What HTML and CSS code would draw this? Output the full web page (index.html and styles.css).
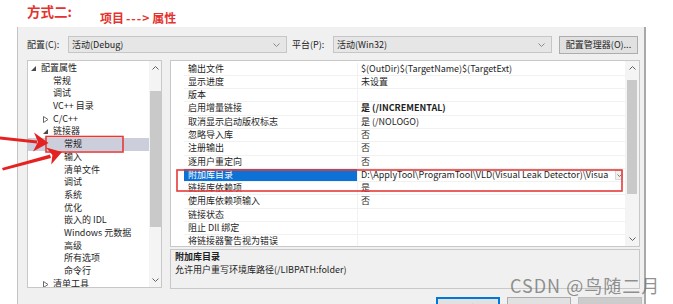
FILE: index.html
```html
<!DOCTYPE html>
<html>
<head>
<meta charset="utf-8">
<link rel="stylesheet" href="styles.css">
</head>
<body>
<div class="title">
  <span class="t1">方式二:</span>
  <span class="t2">项目<span class="dash">---&gt;</span>属性</span>
</div>
<div class="dialog">
  <div class="toolbar">
    <span class="lbl">配置(C):</span>
    <div class="combo"><span class="ctext">活动(Debug)</span><svg class="chev" width="7" height="4" viewBox="0 0 7 4"><polyline points="0.5,0.5 3.5,3.5 6.5,0.5" fill="none" stroke="#8a8a8a" stroke-width="1"/></svg></div>
    <span class="lbl lbl2">平台(P):</span>
    <div class="combo"><span class="ctext">活动(Win32)</span><svg class="chev" width="7" height="4" viewBox="0 0 7 4"><polyline points="0.5,0.5 3.5,3.5 6.5,0.5" fill="none" stroke="#8a8a8a" stroke-width="1"/></svg></div>
    <div class="btn">配置管理器(O)...</div>
  </div>
  <div class="main">
    <div class="tree">
      <div class="tree-list">
        <div class="row l0"><span class="tg"><svg width="5" height="5" viewBox="0 0 5 5"><polygon points="5,0 5,5 0,5" fill="#4a4a4a"/></svg></span>配置属性</div>
        <div class="row l1"><span class="tg"></span>常规</div>
        <div class="row l1"><span class="tg"></span>调试</div>
        <div class="row l1"><span class="tg"></span>VC++ 目录</div>
        <div class="row l1"><span class="tg"><svg width="6" height="7" viewBox="0 0 6 7"><polygon points="0.5,0.5 5,3.5 0.5,6.5" fill="none" stroke="#6a6a6a" stroke-width="1"/></svg></span>C/C++</div>
        <div class="row l1"><span class="tg"><svg width="5" height="5" viewBox="0 0 5 5"><polygon points="5,0 5,5 0,5" fill="#4a4a4a"/></svg></span>链接器</div>
        <div class="row l2 sel"><span class="tg"></span>常规</div>
        <div class="row l2"><span class="tg"></span>输入</div>
        <div class="row l2"><span class="tg"></span>清单文件</div>
        <div class="row l2"><span class="tg"></span>调试</div>
        <div class="row l2"><span class="tg"></span>系统</div>
        <div class="row l2"><span class="tg"></span>优化</div>
        <div class="row l2"><span class="tg"></span>嵌入的 IDL</div>
        <div class="row l2"><span class="tg"></span>Windows 元数据</div>
        <div class="row l2"><span class="tg"></span>高级</div>
        <div class="row l2"><span class="tg"></span>所有选项</div>
        <div class="row l2"><span class="tg"></span>命令行</div>
        <div class="row l1"><span class="tg"><svg width="6" height="7" viewBox="0 0 6 7"><polygon points="0.5,0.5 5,3.5 0.5,6.5" fill="none" stroke="#6a6a6a" stroke-width="1"/></svg></span>清单工具</div>
      </div>
      <div class="vscroll tscroll">
        <svg class="sarrow" width="7" height="4" viewBox="0 0 7 4"><polyline points="0.5,3.5 3.5,0.5 6.5,3.5" fill="none" stroke="#606060" stroke-width="1"/></svg>
        <div class="thumb tthumb"></div>
        <svg class="sarrow down" width="7" height="4" viewBox="0 0 7 4"><polyline points="0.5,0.5 3.5,3.5 6.5,0.5" fill="none" stroke="#606060" stroke-width="1"/></svg>
      </div>
    </div>
    <div class="rightcol">
      <div class="grid">
        <div class="gutter"></div>
        <div class="grows">
          <div class="grow"><span class="name">输出文件</span><span class="val">$(OutDir)$(TargetName)$(TargetExt)</span></div>
          <div class="grow"><span class="name">显示进度</span><span class="val">未设置</span></div>
          <div class="grow"><span class="name">版本</span><span class="val"></span></div>
          <div class="grow"><span class="name">启用增量链接</span><span class="val b">是 (/INCREMENTAL)</span></div>
          <div class="grow"><span class="name">取消显示启动版权标志</span><span class="val">是 (/NOLOGO)</span></div>
          <div class="grow"><span class="name">忽略导入库</span><span class="val">否</span></div>
          <div class="grow"><span class="name">注册输出</span><span class="val">否</span></div>
          <div class="grow"><span class="name">逐用户重定向</span><span class="val">否</span></div>
          <div class="grow gsel"><span class="name">附加库目录</span><span class="val">D:\ApplyTool\ProgramTool\VLD(Visual Leak Detector)\Visua</span><span class="ddbtn"><svg width="5" height="3" viewBox="0 0 5 3"><polyline points="0.5,0.5 2.5,2.5 4.5,0.5" fill="none" stroke="#777" stroke-width="1"/></svg></span></div>
          <div class="grow"><span class="name">链接库依赖项</span><span class="val">是</span></div>
          <div class="grow"><span class="name">使用库依赖项输入</span><span class="val">否</span></div>
          <div class="grow"><span class="name">链接状态</span><span class="val"></span></div>
          <div class="grow"><span class="name">阻止 Dll 绑定</span><span class="val"></span></div>
          <div class="grow"><span class="name">将链接器警告视为错误</span><span class="val"></span></div>
        </div>
        <div class="vscroll gscroll">
          <svg class="sarrow" width="7" height="4" viewBox="0 0 7 4"><polyline points="0.5,3.5 3.5,0.5 6.5,3.5" fill="none" stroke="#606060" stroke-width="1"/></svg>
          <div class="thumb gthumb"></div>
          <svg class="sarrow down" width="7" height="4" viewBox="0 0 7 4"><polyline points="0.5,0.5 3.5,3.5 6.5,0.5" fill="none" stroke="#606060" stroke-width="1"/></svg>
        </div>
      </div>
      <div class="desc">
        <div class="dtitle">附加库目录</div>
        <div class="dtext">允许用户重写环境库路径(/LIBPATH:folder)</div>
      </div>
    </div>
  </div>
  <div class="buttons">
    <div class="dbtn primary">确定</div>
    <div class="dbtn">取消</div>
    <div class="dbtn disabled">应用</div>
  </div>
</div>

<svg class="annot" width="673" height="304" viewBox="0 0 673 304">
  <rect x="46" y="136.5" width="77" height="15.5" fill="none" stroke="#e53a3a" stroke-width="1.6"/>
  <rect x="177" y="170" width="445" height="21" fill="none" stroke="#e53a3a" stroke-width="1.6"/>
  <polygon points="0,136.5 37,140.5 37,143.5 0,139.5" fill="#e42222"/>
  <polygon points="34,132.5 48.5,143 33,151.5 38,142" fill="#e42222"/>
  <polygon points="2,168 50,154.5 51,158 3,170.5" fill="#e42222"/>
  <polygon points="46,147.5 62,152 51.2,164.5 52.4,155" fill="#e42222"/>
</svg>
<div class="watermark">CSDN @鸟随二月</div>
</body>
</html>
```

FILE: styles.css
```css
* {
  box-sizing: border-box;
  margin: 0;
  padding: 0;
}

html, body {
  width: 673px;
  height: 304px;
  overflow: hidden;
  background: #ffffff;
}

body {
  position: relative;
  font-family: "Noto Sans CJK SC", "Noto Sans", sans-serif;
  font-size: 9px;
  color: #1e1e1e;
}

.title {
  height: 27px;
  display: flex;
  align-items: flex-start;
  padding-left: 27px;
  color: #e5322d;
  font-weight: bold;
}

.t1 {
  font-size: 13.5px;
  line-height: 14px;
  margin-top: 4px;
}

.t2 {
  font-size: 12px;
  line-height: 13px;
  margin-top: 11px;
  margin-left: 28px;
}

.dash {
  letter-spacing: 1px;
  padding: 0 2px;
}

.dialog {
  margin-left: 17px;
  width: 629px;
  height: 277px;
  background: #f0f0f0;
  border-left: 1px solid #c4c4c4;
  border-right: 2px solid #a9a9a9;
  padding: 9px 0 0 9px;
}

.toolbar {
  display: flex;
  align-items: center;
  height: 17px;
}

.lbl {
  width: 41px;
  line-height: 17px;
}

.lbl2 {
  margin-left: 5px;
}

.combo {
  width: 219px;
  height: 17px;
  background: #e6e6e6;
  border: 1px solid #c6c6c6;
  display: flex;
  align-items: center;
  justify-content: space-between;
  padding: 0 6px 0 3px;
}

.ctext {
  line-height: 15px;
}

.btn {
  margin-left: 7px;
  width: 79px;
  height: 18px;
  background: #e1e1e1;
  border: 1px solid #adadad;
  display: flex;
  align-items: center;
  justify-content: center;
}

.main {
  margin-top: 7px;
  display: flex;
  gap: 8px;
  height: 229px;
}

.tree {
  width: 135px;
  height: 228px;
  background: #ffffff;
  border: 1px solid #c8c8c8;
  display: flex;
}

.tree-list {
  flex: 1;
  padding-top: 1px;
  overflow: hidden;
}

.row {
  height: 12.7px;
  line-height: 12.7px;
  display: flex;
  align-items: center;
  white-space: nowrap;
}

.l0 { padding-left: 3px; }
.l1 { padding-left: 15px; }
.l2 { padding-left: 26px; }

.tg {
  width: 10px;
  display: flex;
  align-items: center;
}

.sel {
  background: #cccedb;
}

.vscroll {
  display: flex;
  flex-direction: column;
  align-items: center;
  background: #f4f4f4;
}

.tscroll {
  width: 12px;
}

.sarrow {
  margin-top: 5px;
  flex: none;
}

.sarrow.down {
  margin-top: auto;
  margin-bottom: 5px;
}

.thumb {
  background: #c9c9c9;
  flex: none;
}

.tthumb {
  width: 11px;
  height: 136px;
  margin-top: 21px;
}

.rightcol {
  width: 470px;
  display: flex;
  flex-direction: column;
  gap: 2px;
}

.grid {
  height: 187px;
  background: #ffffff;
  border: 1px solid #c8c8c8;
  display: flex;
}

.gutter {
  width: 13px;
}

.grows {
  width: 441px;
  padding-top: 1.5px;
  overflow: hidden;
}

.grow {
  height: 13.3px;
  display: flex;
  align-items: center;
  border-bottom: 1px solid #f1f1f1;
  white-space: nowrap;
}

.name {
  width: 174px;
  flex: none;
  padding-left: 4px;
  line-height: 12.3px;
  border-right: 1px solid #f1f1f1;
}

.val {
  flex: 1;
  padding-left: 3px;
  line-height: 12.3px;
  overflow: hidden;
}

.b {
  font-weight: bold;
}

.gsel .name {
  background: #0c72d6;
  color: #ffffff;
}

.ddbtn {
  width: 8px;
  height: 10px;
  flex: none;
  background: #f0f0f0;
  border: 1px solid #d8d8d8;
  display: flex;
  align-items: center;
  justify-content: center;
  margin-right: 2px;
}

.gscroll {
  width: 14px;
}

.gthumb {
  width: 10px;
  height: 114px;
  margin-top: 10px;
}

.desc {
  height: 40px;
  border: 1px solid #c8c8c8;
  background: #f0f0f0;
  padding: 0 0 0 4px;
}

.dtitle {
  font-weight: bold;
  line-height: 13px;
}

.dtext {
  line-height: 13px;
}

.buttons {
  margin-top: 8px;
  display: flex;
  justify-content: flex-end;
  gap: 7px;
  padding-right: 2px;
}

.dbtn {
  width: 64px;
  height: 22px;
  background: #e1e1e1;
  border: 1px solid #adadad;
  display: flex;
  align-items: center;
  justify-content: center;
}

.dbtn.primary {
  border: 2px solid #0078d7;
}

.dbtn.disabled {
  background: #cccccc;
  border-color: #bfbfbf;
  color: #8d8d8d;
}

.annot {
  position: absolute;
  left: 0;
  top: 0;
  pointer-events: none;
}

.watermark {
  position: absolute;
  left: 510px;
  top: 274px;
  font-size: 18px;
  letter-spacing: 1px;
  line-height: 22px;
  color: rgba(110, 110, 110, 0.75);
  white-space: nowrap;
}
```
